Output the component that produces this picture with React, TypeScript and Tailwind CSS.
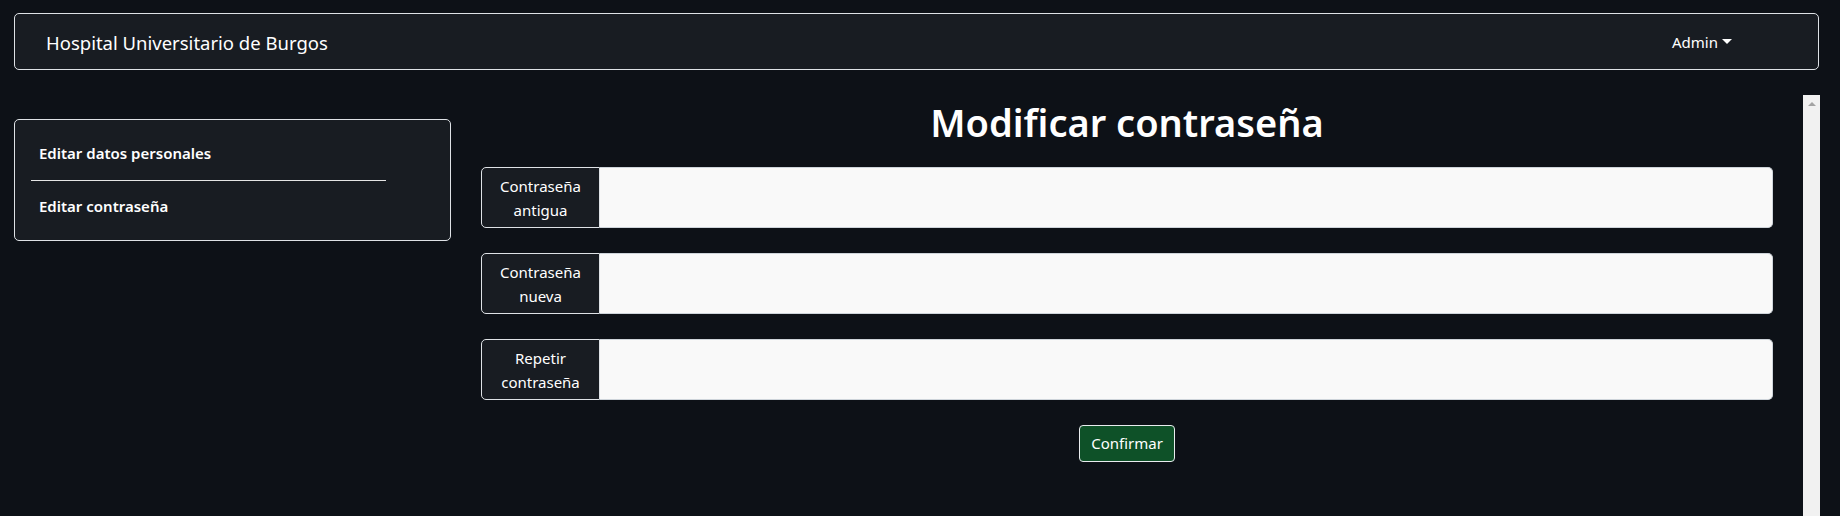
import React from 'react';

const fields = [
  { id: 'old', label: 'Contraseña antigua' },
  { id: 'new', label: 'Contraseña nueva' },
  { id: 'repeat', label: 'Repetir contraseña' },
];

export default function App() {
  return (
    <div className="h-[516px] overflow-hidden bg-[#0d1117] font-['Noto_Sans',sans-serif] text-white flex flex-col">
      {/* Navbar */}
      <div className="pl-[14px] pr-[21px] pt-[13px]">
        <nav className="h-[57px] border border-[#dee2e6] rounded-[5px] bg-[#181c22] flex items-center justify-between pl-[31px] pr-[86px]">
          <span className="text-[18.5px] leading-[30px] mt-[2px]">Hospital Universitario de Burgos</span>
          <button className="flex items-center gap-[4px] text-[15px] leading-6">
            Admin
            <span className="inline-block w-0 h-0 border-l-[5px] border-r-[5px] border-t-[5px] border-l-transparent border-r-transparent border-t-white mt-[-1px]" />
          </button>
        </nav>
      </div>

      <div className="flex flex-1 min-h-0 mt-[25px]">
        {/* Sidebar */}
        <aside className="pl-[14px] pr-[15px] pt-[24px]">
          <div className="w-[437px] border border-[#dee2e6] rounded-[5px] bg-[#181c22] pt-[21px] pb-[22px] pl-[16px]">
            <a className="block pl-[8px] text-[15px] leading-6 font-semibold">Editar datos personales</a>
            <div className="w-[355px] h-px bg-[#e5e5e5] mt-[15px] mb-[13px]" />
            <a className="block pl-[8px] text-[15px] leading-6 font-semibold">Editar contraseña</a>
          </div>
        </aside>

        {/* Main */}
        <main className="flex-1 min-w-0 pl-[15px] pr-[30px] pt-[3px]">
          <h1 className="text-center text-[38px] leading-[48px] font-semibold">Modificar contraseña</h1>
          <form className="mt-[21px] flex flex-col gap-[25px]">
            {fields.map((f) => (
              <div key={f.id} className="flex h-[61px]">
                <label className="w-[119px] shrink-0 flex items-center justify-center text-center px-[12px] text-[15px] leading-6 bg-[#181c22] border border-[#dee2e6] rounded-l-[5px]">
                  {f.label}
                </label>
                <input type="password" className="flex-1 bg-[#f9f9f9] border border-[#ced4da] border-l-0 rounded-r-[5px] outline-none" />
              </div>
            ))}
            <div className="flex justify-center">
              <button type="button" className="h-[37px] px-[11px] text-[15px] bg-[#0e5128] border border-[#e9ecef] rounded-[4px]">
                Confirmar
              </button>
            </div>
          </form>
        </main>

        {/* Scrollbar */}
        <div className="w-[17px] bg-[#f1f1f1] flex justify-center pt-[7px] mr-[20px]">
          <span className="w-0 h-0 border-l-[4px] border-r-[4px] border-b-[4px] border-l-transparent border-r-transparent border-b-[#a3a3a3]" />
        </div>
      </div>
    </div>
  );
}
